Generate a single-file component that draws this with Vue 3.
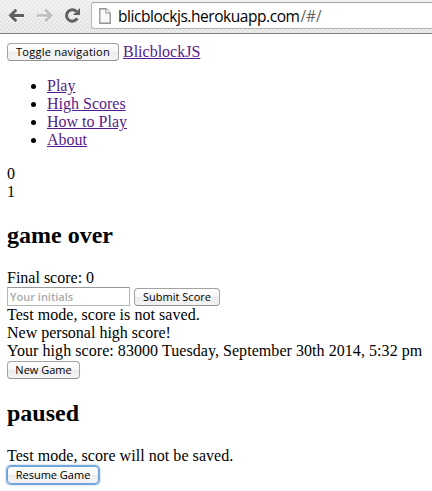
<script setup>
const links = ['Play', 'High Scores', 'How to Play', 'About']
</script>

<template>
  <div class="window">
    <header class="toolbar">
      <svg class="nav" width="84" height="33" viewBox="0 0 84 33" fill="none">
        <g stroke="#fff" stroke-opacity=".7" stroke-width="3" transform="translate(0 1)">
          <path d="M10 15.500H24M16 9.500L10 15.500L16 21.500" />
          <path d="M38 15.500H51M45 9.500L51 15.500L45 21.500" />
        </g>
        <path d="M10.500 15.500H24M16.300 9.800L10.500 15.500L16.300 21.200" stroke="#606060" stroke-width="2.900" />
        <path d="M37 15.500H51M45.200 9.800L51 15.500L45.200 21.200" stroke="#bdbdbd" stroke-width="2.700" />
        <path d="M77.200 18.200A5.700 5.700 0 1 1 76.400 11.600" stroke="#606060" stroke-width="3" />
        <path d="M80 8V15H73Z" fill="#606060" />
      </svg>
      <div class="address">
        <svg class="page-icon" width="12" height="16" viewBox="0 0 12 16">
          <path d="M.75 .75H7L11.250 5V15.250H.75Z" fill="#f8f8f8" stroke="#929292" stroke-width="1.300" />
          <path d="M7 .75V5H11.250" fill="#fff" stroke="#929292" stroke-width="1.100" />
        </svg>
        <span class="url">blicblockjs.herokuapp.com<span class="path">/#/</span></span>
      </div>
    </header>
    <main>
      <nav>
        <div class="row brand">
          <button class="toggle">Toggle navigation</button>
          <a href="#/">BlicblockJS</a>
        </div>
        <ul>
          <li v-for="link in links" :key="link"><a href="#/">{{ link }}</a></li>
        </ul>
      </nav>
      <div>0</div>
      <div>1</div>
      <section>
        <h2>game over</h2>
        <div>Final score: 0</div>
        <form class="row entry" @submit.prevent>
          <input type="text" placeholder="Your initials" />
          <button class="submit">Submit Score</button>
        </form>
        <div class="note">Test mode, score is not saved.</div>
        <div>New personal high score!</div>
        <div class="high">Your high score: 83000 Tuesday, September 30th 2014, 5:32 pm</div>
        <div class="row single"><button class="new">New Game</button></div>
      </section>
      <section>
        <h2>paused</h2>
        <div class="note">Test mode, score will not be saved.</div>
        <div class="row single"><button class="resume">Resume Game</button></div>
      </section>
    </main>
  </div>
</template>

<style>
body {
  margin: 0;
  background: #fff;
  overflow: hidden;
}
</style>

<style scoped>
.window {
  height: 491px;
  overflow: hidden;
  color: #000;
  font: 16px/18px "Liberation Serif", serif;
}
.toolbar {
  box-sizing: border-box;
  height: 34px;
  display: flex;
  align-items: flex-start;
  border-bottom: 1px solid #808080;
  background:
    repeating-linear-gradient(135deg, rgba(255, 255, 255, .4) 0 1.400px, rgba(205, 205, 205, .2) 1.400px 2.828px),
    linear-gradient(#f0f0f0, #e2e2e2);
}
.nav {
  flex: none;
  margin-right: 7px;
}
.address {
  box-sizing: border-box;
  flex: 1;
  height: 27px;
  margin-top: 2px;
  display: flex;
  align-items: center;
  padding-left: 7px;
  border: 1px solid #b4b4b4;
  border-top-color: #a2a2a2;
  border-right: 0;
  border-radius: 3px 0 0 3px;
  background: #fff;
}
.page-icon {
  flex: none;
  margin-right: 7px;
}
.url {
  font: 500 15.500px/22px "Open Sans", sans-serif;
  letter-spacing: -.45px;
  white-space: nowrap;
}
.path {
  margin-left: 1px;
  color: #666;
  letter-spacing: 0;
}
main {
  padding: 9px 7px 0;
}
.row {
  display: flex;
}
.brand {
  gap: 4px;
  height: 18px;
}
a {
  color: #551a8b;
  text-decoration: underline;
}
ul {
  margin: 16px 0;
  padding-left: 40px;
}
h2 {
  margin: 21px 0 20px;
  font-size: 24px;
  line-height: 27px;
}
button,
input {
  box-sizing: border-box;
  margin: 0;
  font: 500 11px/14px "Open Sans", sans-serif;
  white-space: nowrap;
}
button {
  height: 18px;
  padding: 0;
  border: 1px solid #a3a3a3;
  border-bottom-color: #929292;
  border-radius: 4px;
  background: linear-gradient(#fff 0%, #f7f7f7 48%, #ececec 52%, #f5f5f5 100%);
  color: #000;
}
.toggle {
  width: 112px;
  letter-spacing: .25px;
}
.entry {
  height: 19px;
  gap: 4px;
}
.entry button {
  margin-top: 1px;
}
input {
  width: 123px;
  height: 19px;
  padding: 0 2px;
  border: 1px solid #b5b5b5;
  border-top-color: #989898;
  border-radius: 0;
  outline: 0;
}
input::placeholder {
  color: #a9a9a9;
  opacity: 1;
  font-weight: 600;
}
.submit {
  width: 86px;
}
.note {
  letter-spacing: .05px;
}
.high {
  white-space: nowrap;
  letter-spacing: .055px;
}
.single {
  height: 19px;
  padding-top: 1px;
  box-sizing: border-box;
}
.new {
  width: 73px;
}
.resume {
  width: 92px;
  border-color: #6ea2d5;
  box-shadow: 0 0 0 1px #78abdf, 0 0 2px 1px #8bb9e8;
}
</style>
